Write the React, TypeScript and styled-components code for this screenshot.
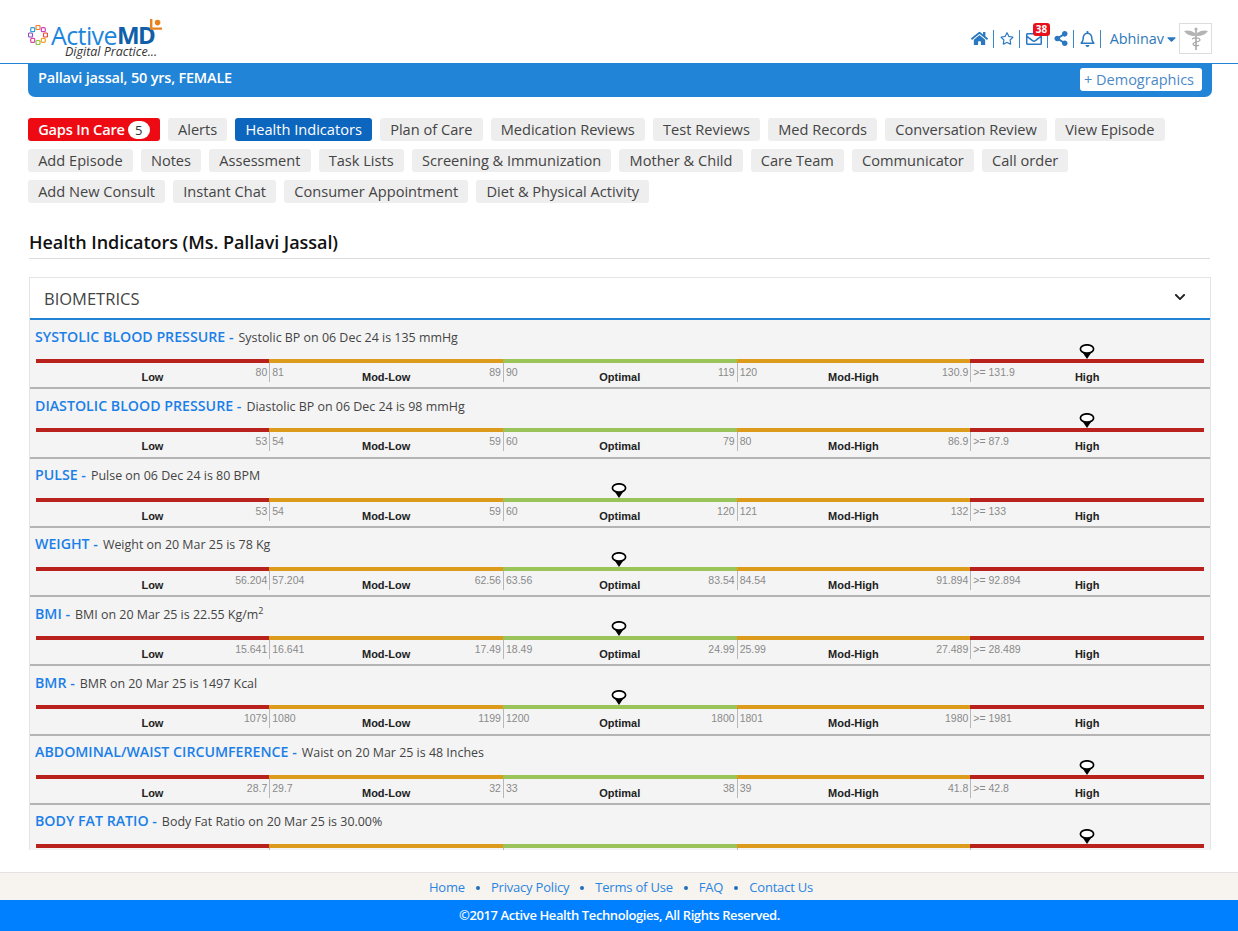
import React from "react";
import styled, { createGlobalStyle } from "styled-components";
import { FaHome, FaRegStar, FaRegEnvelope, FaShareAlt, FaRegBell, FaCaretDown, FaChevronDown } from "react-icons/fa";

const Global = createGlobalStyle`
  html, body { margin: 0; padding: 0; background: #fff; }
  body { font-family: "Open Sans", "Liberation Sans", sans-serif; }
  * { box-sizing: border-box; }
`;

const Page = styled.div`
  height: 931px;
  display: flex;
  flex-direction: column;
  overflow: hidden;
`;
const Header = styled.header`
  height: 64px;
  flex: none;
  border-bottom: 1px solid #2284d6;
  padding: 0 26px 0 28px;
  display: flex;
  align-items: center;
  justify-content: space-between;
`;
const Logo = styled.div`
  display: flex;
  flex-direction: column;
  width: 136px;
  padding-top: 16px;
`;
const LogoTop = styled.div`
  display: flex;
  align-items: center;
  height: 28px;
  position: relative;
`;
const LogoActive = styled.span`
  font-size: 25px;
  line-height: 18px;
  letter-spacing: -0.6px;
  color: #1c85dc;
  margin-left: 3px;
`;
const LogoMd = styled.span`
  font-size: 24px;
  line-height: 18px;
  font-weight: 700;
  letter-spacing: -1.6px;
  color: #105fa8;
`;
const LogoMark = styled.svg`
  position: absolute;
  left: 122px;
  top: -2px;
`;
const LogoSub = styled.span`
  font-size: 12.5px;
  font-style: italic;
  color: #333;
  margin: -4px 0 0 37px;
  line-height: 13px;
  white-space: nowrap;
`;
const Tools = styled.div`
  display: flex;
  align-items: center;
  padding-top: 14px;
`;
const ToolIcon = styled.span<{ $size: number; $w: number }>`
  display: inline-flex;
  justify-content: center;
  position: relative;
  width: ${(p) => p.$w}px;
  font-size: ${(p) => p.$size}px;
  color: #2a78c0;
`;
const Sep = styled.span`
  width: 1px;
  height: 18px;
  background: #3a86c8;
  margin: 0 6px 0 5px;
`;
const Badge = styled.span`
  position: absolute;
  top: -8px;
  right: -8px;
  background: #e8101a;
  color: #fff;
  font-size: 10px;
  font-weight: 700;
  line-height: 13px;
  height: 13px;
  padding: 0 2.5px;
  border-radius: 3px;
`;
const UserName = styled.span`
  font-size: 14.4px;
  color: #2f78b8;
  margin: 0 3px 0 3px;
`;
const Avatar = styled.div`
  width: 33px;
  height: 31px;
  border: 1px solid #ddd;
  margin-left: 3px;
  display: flex;
  align-items: center;
  justify-content: center;
`;
const PatientBar = styled.div`
  height: 33px;
  flex: none;
  margin: 0 26px 0 28px;
  background: #2284d6;
  border-radius: 0 0 7px 7px;
  display: flex;
  align-items: flex-start;
  justify-content: space-between;
  padding: 4px 10px 0 10px;
`;
const PatientName = styled.span`
  color: #fff;
  font-size: 14.5px;
  font-weight: 600;
  letter-spacing: -0.2px;
  line-height: 20px;
`;
const DemoButton = styled.span`
  background: #fff;
  color: #4a88c8;
  font-size: 14.5px;
  line-height: 23px;
  padding: 0 8px 0 4px;
  border-radius: 3px;
`;
const Tabs = styled.nav`
  flex: none;
  margin: 21px 30px 0 28px;
  display: flex;
  flex-wrap: wrap;
  gap: 8px;
`;
const Tab = styled.span<{ $tone?: "red" | "blue" }>`
  height: 23px;
  line-height: 23px;
  padding: 0 10.15px;
  font-size: 14.6px;
  border-radius: 3px;
  display: inline-flex;
  align-items: center;
  background: ${(p) => (p.$tone === "red" ? "#ee0a12" : p.$tone === "blue" ? "#0d66bd" : "#eeeeee")};
  color: ${(p) => (p.$tone ? "#fff" : "#444")};
  font-weight: ${(p) => (p.$tone === "red" ? 600 : 400)};
  letter-spacing: ${(p) => (p.$tone === "red" ? "-0.2px" : "0")};
`;
const TabCount = styled.span`
  background: #fff;
  color: #333;
  width: 22px;
  height: 18px;
  border-radius: 9px;
  margin-left: 3px;
  font-size: 13px;
  font-weight: 400;
  line-height: 18px;
  text-align: center;
`;
const Heading = styled.h1`
  flex: none;
  margin: 28px 28px 0 29px;
  height: 28px;
  border-bottom: 1px solid #ddd;
  font-size: 18px;
  font-weight: 600;
  line-height: 22px;
  letter-spacing: -0.05px;
  color: #111;
`;
const Content = styled.main`
  flex: 1;
  min-height: 0;
  overflow: hidden;
  margin-bottom: 22px;
  padding: 18px 27px 0 29px;
`;
const Panel = styled.section`
  border: 1px solid #e4e4e4;
  border-bottom: none;
`;
const PanelHeader = styled.div`
  height: 42px;
  display: flex;
  align-items: center;
  justify-content: space-between;
  padding: 0 24px 0 14px;
  font-size: 16.5px;
  color: #444;
  border-bottom: 2px solid #2284d6;
  background: #fff;
`;
const Chevron = styled(FaChevronDown)`
  margin-top: -3px;
  color: #222;
`;
const Row = styled.article`
  height: 69.25px;
  background: #f4f4f4;
  border-bottom: 2px solid #b4b4b4;
  padding: 6.5px 5px 0 5px;
`;
const RowTitle = styled.div`
  height: 24.5px;
  display: flex;
  align-items: baseline;
  line-height: 20px;
`;
const Name = styled.span`
  color: #1b7fe8;
  font-size: 14.2px;
  font-weight: 600;
  margin-right: 5px;
`;
const Desc = styled.span`
  color: #444;
  font-size: 12.45px;
`;
const Sup = styled.sup`
  font-size: 9px;
  line-height: 0;
`;
const Scale = styled.div`
  display: grid;
  grid-template-columns: repeat(5, 1fr);
  margin: 8px 1px 0 0.6px;
`;
const Segment = styled.div<{ $color: string; $tick: boolean }>`
  position: relative;
  height: 23px;
  border-top: 4px solid ${(p) => p.$color};
  display: grid;
  grid-template-columns: 1fr auto 1fr;
  padding: 0 2px;
  ${(p) => (p.$tick ? "box-shadow: inset 1px 0 0 #b8b8b8;" : "")}
`;
const Num = styled.span<{ $end?: boolean }>`
  font-family: "Liberation Sans", Arial, sans-serif;
  font-size: 10.5px;
  color: #8a8a8a;
  line-height: 13px;
  margin: 3px 0 0 ${(p) => (p.$end ? 0 : 1)}px;
  justify-self: ${(p) => (p.$end ? "end" : "start")};
`;
const Label = styled.span`
  font-family: "Liberation Sans", Arial, sans-serif;
  font-size: 11px;
  font-weight: 700;
  color: #222;
  line-height: 14px;
  margin-top: 7px;
`;
const Marker = styled.svg`
  position: absolute;
  left: 50%;
  bottom: calc(100% + 4px);
  margin-left: -9.5px;
`;
const FooterLinks = styled.div`
  flex: none;
  height: 28px;
  background: #f7f3ee;
  border-top: 1px solid #e2e2e2;
  display: flex;
  align-items: center;
  justify-content: center;
  padding-left: 4px;
  gap: 8px;
  font-size: 13px;
  letter-spacing: -0.2px;
  color: #2a85e0;
`;
const Dot = styled.span`
  width: 4px;
  height: 4px;
  border-radius: 50%;
  background: #1f6fc0;
  margin: 2px 3px 0;
`;
const Copy = styled.div`
  flex: none;
  height: 31px;
  background: #0080ff;
  color: #fff;
  font-size: 13px;
  font-weight: 600;
  letter-spacing: -0.4px;
  display: flex;
  align-items: center;
  justify-content: center;
  padding: 0 0 1px 1px;
`;

const COLORS = ["#b9211c", "#dd9b1c", "#9ac45a", "#dd9b1c", "#b9211c"];
const LABELS = ["Low", "Mod-Low", "Optimal", "Mod-High", "High"];

type Indicator = {
  name: string;
  desc: React.ReactNode;
  nums?: string[];
  at: number;
};

const rows: Indicator[] = [
  { name: "SYSTOLIC BLOOD PRESSURE", desc: "Systolic BP on 06 Dec 24 is 135 mmHg", nums: ["80", "81", "89", "90", "119", "120", "130.9", ">= 131.9"], at: 4 },
  { name: "DIASTOLIC BLOOD PRESSURE", desc: "Diastolic BP on 06 Dec 24 is 98 mmHg", nums: ["53", "54", "59", "60", "79", "80", "86.9", ">= 87.9"], at: 4 },
  { name: "PULSE", desc: "Pulse on 06 Dec 24 is 80 BPM", nums: ["53", "54", "59", "60", "120", "121", "132", ">= 133"], at: 2 },
  { name: "WEIGHT", desc: "Weight on 20 Mar 25 is 78 Kg", nums: ["56.204", "57.204", "62.56", "63.56", "83.54", "84.54", "91.894", ">= 92.894"], at: 2 },
  { name: "BMI", desc: <>BMI on 20 Mar 25 is 22.55 Kg/m<Sup>2</Sup></>, nums: ["15.641", "16.641", "17.49", "18.49", "24.99", "25.99", "27.489", ">= 28.489"], at: 2 },
  { name: "BMR", desc: "BMR on 20 Mar 25 is 1497 Kcal", nums: ["1079", "1080", "1199", "1200", "1800", "1801", "1980", ">= 1981"], at: 2 },
  { name: "ABDOMINAL/WAIST CIRCUMFERENCE", desc: "Waist on 20 Mar 25 is 48 Inches", nums: ["28.7", "29.7", "32", "33", "38", "39", "41.8", ">= 42.8"], at: 4 },
  { name: "BODY FAT RATIO", desc: "Body Fat Ratio on 20 Mar 25 is 30.00%", at: 4 },
];

const tabs = [
  "Alerts", "Health Indicators", "Plan of Care", "Medication Reviews", "Test Reviews", "Med Records",
  "Conversation Review", "View Episode", "Add Episode", "Notes", "Assessment", "Task Lists",
  "Screening & Immunization", "Mother & Child", "Care Team", "Communicator", "Call order",
  "Add New Consult", "Instant Chat", "Consumer Appointment", "Diet & Physical Activity",
];

const LogoRing = () => {
  const colors = ["#e8463a", "#f0a020", "#8cc63f", "#e040a0", "#8a4fc8", "#2a9fd8", "#f08030", "#d040c0"];
  return (
    <svg width="20" height="20" viewBox="0 0 20 20">
      {colors.map((c, i) => {
        const a = (i / colors.length) * Math.PI * 2;
        return <rect key={c + i} x={10 + 7.5 * Math.cos(a) - 2} y={10 + 7.5 * Math.sin(a) - 2} width="4" height="4" rx="1" fill="none" stroke={c} strokeWidth="1.2" />;
      })}
    </svg>
  );
};

const Caduceus = () => (
  <svg width="26" height="26" viewBox="0 0 26 26" fill="#b4b4b4">
    <path d="M13 3v21" stroke="#a8a8a8" strokeWidth="1.6" />
    <path d="M12 7C8 4 4 4 1 5c2 3 6 5 11 5zM14 7c4-3 8-3 11-2-2 3-6 5-11 5z" />
    <path d="M9 13c3-2 8-1 8 1s-7 2-7 4 5 2 6 1" fill="none" stroke="#a8a8a8" strokeWidth="1.2" />
    <circle cx="13" cy="3" r="1.6" />
  </svg>
);

const Pin = () => (
  <Marker width="18" height="15" viewBox="0 0 18 15">
    <path d="M9 15 4.6 8.5h8.8z" fill="#000" />
    <ellipse cx="9" cy="5" rx="6.6" ry="4.2" fill="#fff" stroke="#000" strokeWidth="1.7" />
  </Marker>
);

export default function App() {
  return (
    <Page>
      <Global />
      <Header>
        <Logo>
          <LogoTop>
            <LogoRing />
            <LogoActive>Active</LogoActive>
            <LogoMd>MD</LogoMd>
            <LogoMark width="12" height="13" viewBox="0 0 12 13">
              <path d="M0 0h2.4v8.4H12v2.4H0z" fill="#e8821e" />
              <circle cx="7.6" cy="3.6" r="2.8" fill="#e8821e" />
            </LogoMark>
          </LogoTop>
          <LogoSub>Digital Practice...</LogoSub>
        </Logo>
        <Tools>
          <ToolIcon $size={17} $w={17}><FaHome /></ToolIcon>
          <Sep />
          <ToolIcon $size={15} $w={14}><FaRegStar /></ToolIcon>
          <Sep />
          <ToolIcon $size={16} $w={16}><FaRegEnvelope /><Badge>38</Badge></ToolIcon>
          <Sep />
          <ToolIcon $size={15} $w={14}><FaShareAlt /></ToolIcon>
          <Sep />
          <ToolIcon $size={16} $w={15}><FaRegBell /></ToolIcon>
          <Sep />
          <UserName>Abhinav</UserName>
          <ToolIcon $size={14} $w={9}><FaCaretDown /></ToolIcon>
          <Avatar><Caduceus /></Avatar>
        </Tools>
      </Header>
      <PatientBar>
        <PatientName>Pallavi jassal, 50 yrs, FEMALE</PatientName>
        <DemoButton>+ Demographics</DemoButton>
      </PatientBar>
      <Tabs>
        <Tab $tone="red">Gaps In Care<TabCount>5</TabCount></Tab>
        {tabs.map((t) => (
          <Tab key={t} $tone={t === "Health Indicators" ? "blue" : undefined}>{t}</Tab>
        ))}
      </Tabs>
      <Heading>Health Indicators (Ms. Pallavi Jassal)</Heading>
      <Content>
        <Panel>
          <PanelHeader>
            BIOMETRICS
            <Chevron size={12} />
          </PanelHeader>
          {rows.map((r) => (
            <Row key={r.name}>
              <RowTitle>
                <Name>{r.name} -</Name>
                <Desc>{r.desc}</Desc>
              </RowTitle>
              <Scale>
                {LABELS.map((l, i) => (
                  <Segment key={l} $color={COLORS[i]} $tick={i > 0}>
                    {r.nums && <Num>{i > 0 ? r.nums[i * 2 - 1] : ""}</Num>}
                    {r.nums && <Label>{l}</Label>}
                    {r.nums && <Num $end>{i < 4 ? r.nums[i * 2] : ""}</Num>}
                    {r.at === i && <Pin />}
                  </Segment>
                ))}
              </Scale>
            </Row>
          ))}
        </Panel>
      </Content>
      <FooterLinks>
        <span>Home</span><Dot />
        <span>Privacy Policy</span><Dot />
        <span>Terms of Use</span><Dot />
        <span>FAQ</span><Dot />
        <span>Contact Us</span>
      </FooterLinks>
      <Copy>©2017 Active Health Technologies, All Rights Reserved.</Copy>
    </Page>
  );
}
